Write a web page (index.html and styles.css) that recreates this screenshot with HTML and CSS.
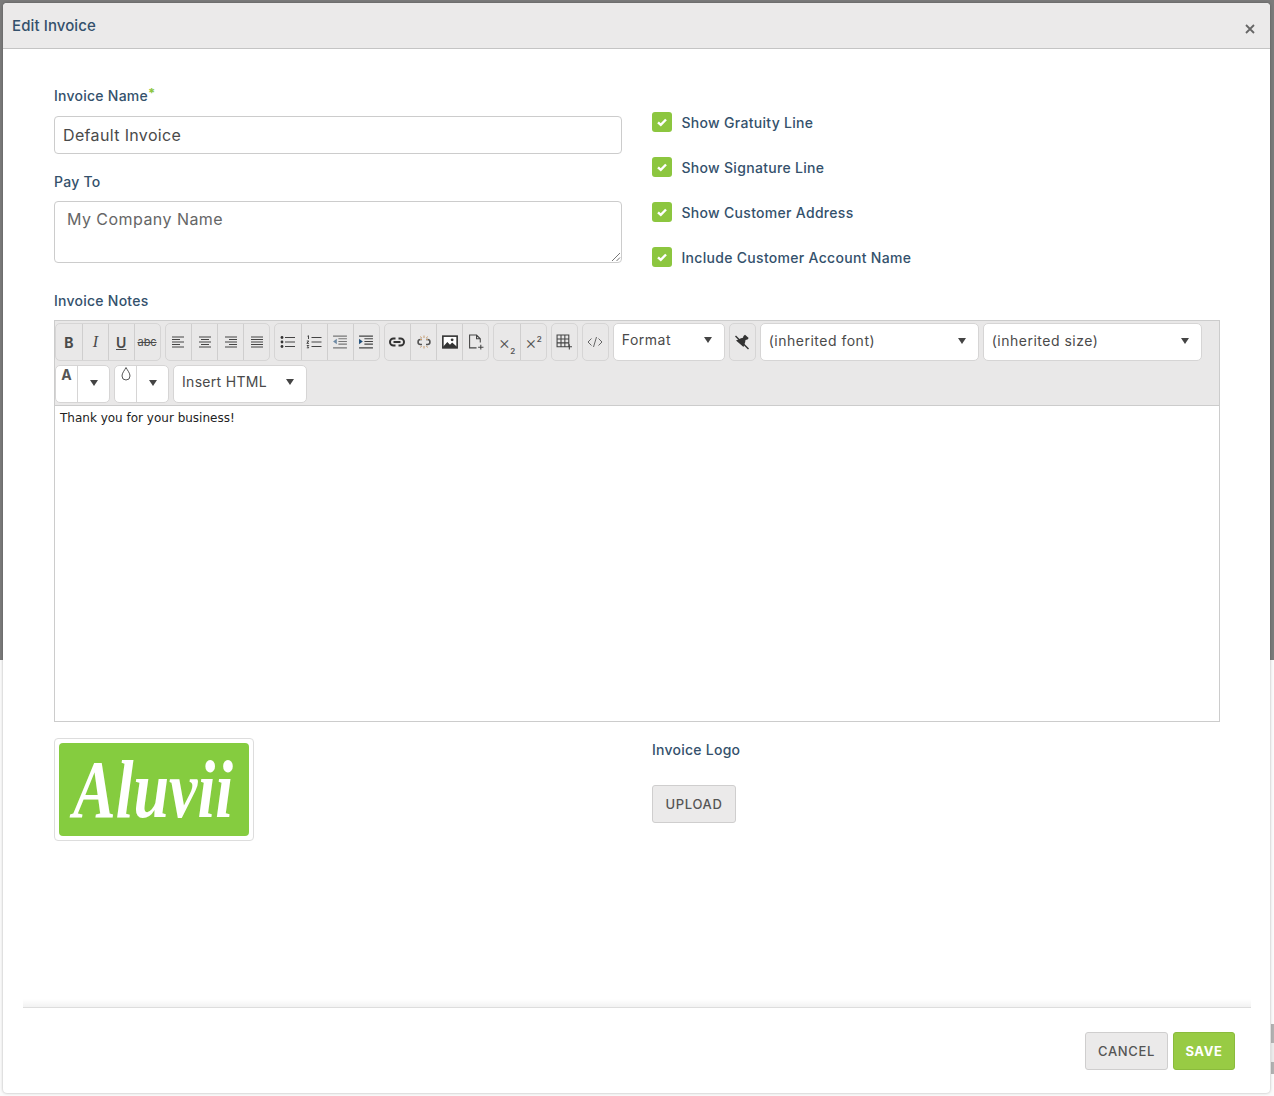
FILE: index.html
```html
<!DOCTYPE html>
<html lang="en">
<head>
<meta charset="utf-8">
<title>Edit Invoice</title>
<link rel="stylesheet" href="styles.css">
</head>
<body>
<div class="backdrop"></div>
<div class="edge-strip"></div>
<div class="modal">
  <header class="modal-head">
    <h1 class="modal-title">Edit Invoice</h1>
    <svg class="close" viewBox="0 0 10 10" width="10" height="10"><path d="M1 1l8 8M9 1l-8 8"/></svg>
  </header>
  <main class="modal-body">
    <section class="two-col top-row">
      <div>
        <label class="label label-first">Invoice Name<span class="req">*</span></label>
        <div class="input">Default Invoice</div>
        <label class="label label-payto">Pay To</label>
        <div class="textarea">My Company Name
          <svg class="grip" viewBox="0 0 10 10" width="10" height="10"><path d="M1 9l8-8M5.500 9l3.500-3.500"/></svg>
        </div>
      </div>
      <ul class="checks">
        <li class="check"><span class="box"><svg viewBox="0 0 12 12" width="12" height="12"><path d="M2 6.300l2.800 2.600L10 3.500"/></svg></span>Show Gratuity Line</li>
        <li class="check"><span class="box"><svg viewBox="0 0 12 12" width="12" height="12"><path d="M2 6.300l2.800 2.600L10 3.500"/></svg></span>Show Signature Line</li>
        <li class="check"><span class="box"><svg viewBox="0 0 12 12" width="12" height="12"><path d="M2 6.300l2.800 2.600L10 3.500"/></svg></span>Show Customer Address</li>
        <li class="check"><span class="box"><svg viewBox="0 0 12 12" width="12" height="12"><path d="M2 6.300l2.800 2.600L10 3.500"/></svg></span>Include Customer Account Name</li>
      </ul>
    </section>

    <label class="label label-notes">Invoice Notes</label>
    <section class="editor">
      <div class="toolbar">
        <div class="group">
          <span class="btn t-b">B</span><span class="btn t-i">I</span><span class="btn t-u">U</span><span class="btn t-s">abc</span>
        </div>
        <div class="group">
          <span class="btn"><svg class="ic" viewBox="0 0 14 14"><path d="M1 2h12M1 4.500h8M1 7h12M1 9.500h8M1 12h12"/></svg></span>
          <span class="btn"><svg class="ic" viewBox="0 0 14 14"><path d="M1 2h12M3 4.500h8M1 7h12M3 9.500h8M1 12h12"/></svg></span>
          <span class="btn"><svg class="ic" viewBox="0 0 14 14"><path d="M1 2h12M5 4.500h8M1 7h12M5 9.500h8M1 12h12"/></svg></span>
          <span class="btn"><svg class="ic" viewBox="0 0 14 14"><path d="M1 2h12M1 4.500h12M1 7h12M1 9.500h12M1 12h12"/></svg></span>
        </div>
        <div class="group">
          <span class="btn"><svg class="ic ic-w" viewBox="0 0 16 14"><path d="M5 2.500h10M5 7h10M5 11.500h10"/><circle class="fill" cx="2" cy="2.500" r="1.400"/><circle class="fill" cx="2" cy="7" r="1.400"/><circle class="fill" cx="2" cy="11.500" r="1.400"/></svg></span>
          <span class="btn"><svg class="ic ic-w" viewBox="0 0 16 14"><path d="M5.500 2.500h10M5.500 7h10M5.500 11.500h10"/><path class="thin" d="M1.500 1.200l1-.5v3.300M.8 6h2l-2 2.300h2.200M.8 10.500h2l-1 1 1 1.300H.8"/></svg></span>
          <span class="btn"><svg class="ic ic-w" viewBox="0 0 15 14"><path d="M1 1.500h13M6 4h8M6 6.500h8M6 9h8M1 12.500h13" class="gray"/><path class="blue-soft" d="M4.500 4v5L1 6.500z"/></svg></span>
          <span class="btn"><svg class="ic ic-w" viewBox="0 0 15 14"><path d="M1 1.500h13M6 4h8M6 6.500h8M6 9h8M1 12.500h13"/><path class="blue" d="M1 4v5l3.500-2.500z"/></svg></span>
        </div>
        <div class="group">
          <span class="btn"><svg class="ic ic-w" viewBox="0 0 16 10"><path class="link" d="M6.500 1.500H4.500a3.500 3.500 0 0 0 0 7h2M9.500 1.500h2a3.500 3.500 0 0 1 0 7h-2M4.500 5h7"/></svg></span>
          <span class="btn"><svg class="ic ic-w" viewBox="0 0 16 14"><path class="unlink" d="M6 4.500H4.500a2.500 2.500 0 0 0 0 5H6M10 4.500h1.500a2.500 2.500 0 0 1 0 5H10M2 7h1M13 7h1"/><path class="dash" d="M8 .5v2.500M8 11v2.500M4.500 1.500l1 1.500M11.500 1.500l-1 1.500M5.500 11l-1 1.500M10.500 11l1 1.500M4 4.500h2M10 4.500h2"/></svg></span>
          <span class="btn"><svg class="ic ic-w" viewBox="0 0 15 13"><rect x=".8" y="1" width="13.400" height="11" class="frame"/><path class="fill" d="M1 11l4-4.500 2.500 2.500 2-2 4.500 4v1H1z"/><circle class="fill" cx="9.500" cy="4.500" r="1.300"/></svg></span>
          <span class="btn"><svg class="ic ic-w" viewBox="0 0 15 15"><path class="thin" d="M8 13H1.500V1H8l3.500 3.500V8M8 1v3.500h3.500M12 10v4.500M9.500 12.500h5"/></svg></span>
        </div>
        <div class="group">
          <span class="btn t-sub"><span>×<sub>2</sub></span></span><span class="btn t-sub"><span>×<sup>2</sup></span></span>
        </div>
        <div class="group group-one">
          <span class="btn"><svg class="ic ic-w" viewBox="0 0 15 15"><path class="thin" d="M1 1h11v11H1zM1 4.700h11M1 8.300h11M4.700 1v11M8.300 1v11M12.500 9.500v5M10 12h5"/></svg></span>
        </div>
        <div class="group group-one">
          <span class="btn"><svg class="ic ic-w" viewBox="0 0 16 12"><path class="code" d="M4.500 2.500L1 6l3.500 3.500M11.500 2.500L15 6l-3.500 3.500M9.500 1L6.500 11"/></svg></span>
        </div>
        <div class="select sel-format"><span>Format</span><i class="caret"></i></div>
        <div class="group group-one">
          <span class="btn"><svg class="ic ic-w" viewBox="0 0 16 16"><path class="fill" d="M9.500 2l1.500-1.200 3.700 3.200-1.200 1.500-2 .5-.3 2-1.700 5L2 6.500l5-2.200 2-.5z"/><path class="thin-dark" d="M1.500 2l13 13"/></svg></span>
        </div>
        <div class="select sel-font"><span>(inherited font)</span><i class="caret"></i></div>
        <div class="select sel-font"><span>(inherited size)</span><i class="caret"></i></div>
        <div class="color">
          <span class="color-main"><b class="color-a">A</b></span><span class="color-drop"><i class="caret"></i></span>
        </div>
        <div class="color">
          <span class="color-main"><svg class="drop" viewBox="0 0 12 16" width="12" height="16"><path d="M6 1.500C4.500 4.500 2 7 2 10a4 4 0 0 0 8 0c0-3-2.500-5.500-4-8.500z"/></svg></span><span class="color-drop"><i class="caret"></i></span>
        </div>
        <div class="select sel-html"><span>Insert HTML</span><i class="caret"></i></div>
      </div>
      <div class="editor-area">Thank you for your business!</div>
    </section>

    <section class="two-col logo-row">
      <div>
        <div class="thumb">
          <svg class="logo" viewBox="0 0 190 93" width="190" height="93" role="img" aria-label="Aluvii logo">
            <rect width="190" height="93" rx="4"/>
            <text transform="translate(14 74) scale(1 1.3)">Aluvii</text>
          </svg>
        </div>
      </div>
      <div>
        <label class="label label-logo">Invoice Logo</label>
        <div class="action action-upload">UPLOAD</div>
      </div>
    </section>
  </main>
  <footer class="modal-foot">
    <div class="action action-cancel">CANCEL</div>
    <div class="action action-save">SAVE</div>
  </footer>
</div>
</body>
</html>
```

FILE: styles.css
```css
* { box-sizing: border-box; }
html, body { margin: 0; height: 100%; }
body {
  background: #fbfbfb;
  font-family: Inter, "Noto Sans", sans-serif;
  color: #4a4a4a;
  overflow: hidden;
}
.backdrop {
  position: absolute;
  left: 0; top: 0; right: 0;
  height: 660px;
  background: #7b7b7b;
}
.edge-strip {
  position: absolute;
  right: 0; top: 1024px;
  width: 3px;
  height: 50px;
  background: linear-gradient(to bottom, #b2b2b2 0 38%, #ececec 38% 76%, #b2b2b2 76%);
}
.modal {
  position: absolute;
  left: 3px; top: 3px;
  width: 1267px;
  height: 1090px;
  background: #fff;
  border-radius: 4px;
  box-shadow: 0 0 3px rgba(0,0,0,.3);
  display: flex;
  flex-direction: column;
}
.modal-head {
  height: 46px;
  flex: none;
  background: #ebeaea;
  border-bottom: 1px solid #c4c4c4;
  border-radius: 4px 4px 0 0;
  display: flex;
  justify-content: space-between;
  padding: 0 15px 0 9px;
}
.modal-title {
  margin: 0;
  font-size: 15px;
  line-height: 45px;
  font-weight: 500;
  letter-spacing: .1px;
  color: #34516c;
}
.close { margin-top: 21px; fill: none; }
.close path { stroke: #666; stroke-width: 1.800; }

.modal-body { flex: 1; padding: 37px 50px 0 51px; }
.two-col { display: grid; grid-template-columns: 568px 568px; column-gap: 30px; }
.label {
  display: block;
  font-size: 14px;
  line-height: 20px;
  font-weight: 500;
  letter-spacing: .25px;
  color: #34516c;
}
.label-first { margin-bottom: 10px; }
.label-payto { margin: 18px 0 9px; }
.label-notes { margin: 24px 0 9px; }
.label-logo { margin: 2px 0 25px; }
.req { color: #8cc63f; font-size: 13px; vertical-align: 3px; line-height: 1; font-weight: 700; }
.input {
  height: 38px;
  border: 1px solid #ccc;
  border-radius: 4px;
  padding: 0 8px;
  font-size: 16px;
  line-height: 36px;
  letter-spacing: .35px;
  color: #4a4a4a;
}
.textarea {
  position: relative;
  height: 62px;
  border: 1px solid #ccc;
  border-radius: 4px;
  padding: 6px 12px;
  font-size: 16px;
  line-height: 22px;
  letter-spacing: .45px;
  color: #666;
}
.grip { position: absolute; right: 0; bottom: 0; }
.grip path { stroke: #777; stroke-width: 1; fill: none; }

.checks { list-style: none; margin: 26px 0 0; padding: 0; display: flex; flex-direction: column; gap: 25px; }
.check {
  display: flex;
  align-items: center;
  height: 20px;
  font-size: 14px;
  font-weight: 500;
  letter-spacing: .3px;
  color: #34516c;
}
.box {
  width: 20px; height: 20px;
  border-radius: 3px;
  background: #8cc63f;
  margin-right: 9.500px;
  display: flex;
  align-items: center;
  justify-content: center;
}
.box path { fill: none; stroke: #fff; stroke-width: 2.400; }

.editor { border: 1px solid #ccc; height: 402px; display: flex; flex-direction: column; }
.toolbar {
  height: 85px;
  flex: none;
  background: #e9e8e8;
  border-bottom: 1px solid #ccc;
  padding: 2px 0 0 0;
  display: flex;
  flex-wrap: wrap;
  align-content: flex-start;
  gap: 4px;
}
.group {
  height: 38px;
  display: flex;
  border: 1px solid #d6d5d5;
  border-radius: 5px;
  background: #e9e8e8;
}
.btn {
  width: 25.875px;
  height: 100%;
  display: flex;
  align-items: center;
  justify-content: center;
  font-size: 14px;
  color: #4a4a4a;
  border-left: 1px solid #cfcece;
}
.btn:first-child { border-left: 0; }
.group-one .btn { width: 25px; }
.t-b { font-weight: 700; }
.t-i { font-family: "Liberation Serif", serif; font-style: italic; font-size: 16px; }
.t-u { text-decoration: underline; font-weight: 600; }
.t-s { text-decoration: line-through; font-size: 11px; }
.t-sub { font-size: 18px; font-weight: 300; color: #555; }
.t-sub sub, .t-sub sup { font-size: 8px; font-weight: 600; line-height: 0; }
.ic { width: 14px; height: 14px; fill: none; stroke: #444; stroke-width: 1; }
.ic-w { width: 16px; height: 16px; }
.ic .fill { fill: #333; stroke: none; }
.ic .thin { stroke: #444; stroke-width: 1; }
.ic .code { stroke: #666; stroke-width: 1; }
.ic .gray { stroke: #777; }
.ic .blue { fill: #1f4e7a; stroke: none; }
.ic .blue-soft { fill: #6f8ba5; stroke: none; }
.ic .link { stroke: #333; stroke-width: 2; fill: none; }
.ic .unlink { stroke: #555; stroke-width: 1.500; }
.ic .dash { stroke: #c49a6c; stroke-width: 1; }
.ic .frame { fill: #fff; stroke: #333; stroke-width: 1.500; }
.ic .thin-dark { stroke: #333; stroke-width: 1.400; }

.select {
  height: 38px;
  background: #fff;
  border: 1px solid #d6d5d5;
  border-radius: 5px;
  display: flex;
  align-items: center;
  justify-content: space-between;
  padding: 0 12px 0 8px;
  font-size: 14px;
  letter-spacing: .5px;
  color: #4a4a4a;
}
.select span { margin-top: -3px; }
.sel-format { width: 112px; }
.sel-format span { margin-top: -6px; }
.sel-font { width: 219px; }
.sel-html { width: 134px; }
.sel-html span { margin-top: -6px; letter-spacing: .3px; }
.caret {
  display: block;
  width: 0; height: 0;
  border-left: 4px solid transparent;
  border-right: 4px solid transparent;
  border-top: 6px solid #444;
  margin-top: -2px;
}
.select .caret { margin-top: -4px; }
.sel-font .caret { margin-top: -3px; }
.color {
  height: 38px;
  width: 55px;
  display: flex;
  background: #fff;
  border: 1px solid #d6d5d5;
  border-radius: 5px;
}
.color-main { width: 21px; display: flex; justify-content: center; padding-top: 0; }
.color-a { font-size: 14px; line-height: 18px; font-weight: 700; color: #555; }
.color-drop { flex: 1; border-left: 1px solid #d6d5d5; display: flex; align-items: center; justify-content: center; }
.drop path { fill: none; stroke: #555; stroke-width: 1; }
.editor-area {
  flex: 1;
  background: #fff;
  padding: 4px 5px;
  font-family: "DejaVu Sans", sans-serif;
  font-size: 12px;
  line-height: 16px;
  color: #222;
}

.logo-row { margin-top: 16px; }
.thumb {
  width: 200px;
  height: 103px;
  border: 1px solid #ddd;
  border-radius: 4px;
  padding: 4px;
}
.logo { display: block; }
.logo rect { fill: #85cc3f; }
.logo text {
  font-family: "Liberation Serif", serif;
  font-style: italic;
  font-weight: 700;
  font-size: 64px;
  fill: #fff;
}
.action {
  height: 38px;
  display: inline-flex;
  align-items: center;
  justify-content: center;
  border: 1px solid #cfcece;
  border-radius: 3px;
  background: #ebeaea;
  font-size: 13px;
  font-weight: 500;
  letter-spacing: .65px;
  color: #555;
}
.action-upload { width: 84px; }
.action-cancel { width: 83px; }
.action-save {
  width: 62px;
  background: #98cb44;
  border-color: #8abb3c;
  color: #fff;
  font-weight: 700;
}
.modal-foot {
  position: relative;
  flex: none;
  margin: 0 19px 0 20px;
  padding: 24px 16px 23px 0;
  border-top: 1px solid #ddd;
  display: flex;
  justify-content: flex-end;
  gap: 5px;
}
.modal-foot::before {
  content: "";
  position: absolute;
  left: 0; right: 0; top: -9px;
  height: 8px;
  background: linear-gradient(to bottom, rgba(0,0,0,0), rgba(0,0,0,.05));
}
```
